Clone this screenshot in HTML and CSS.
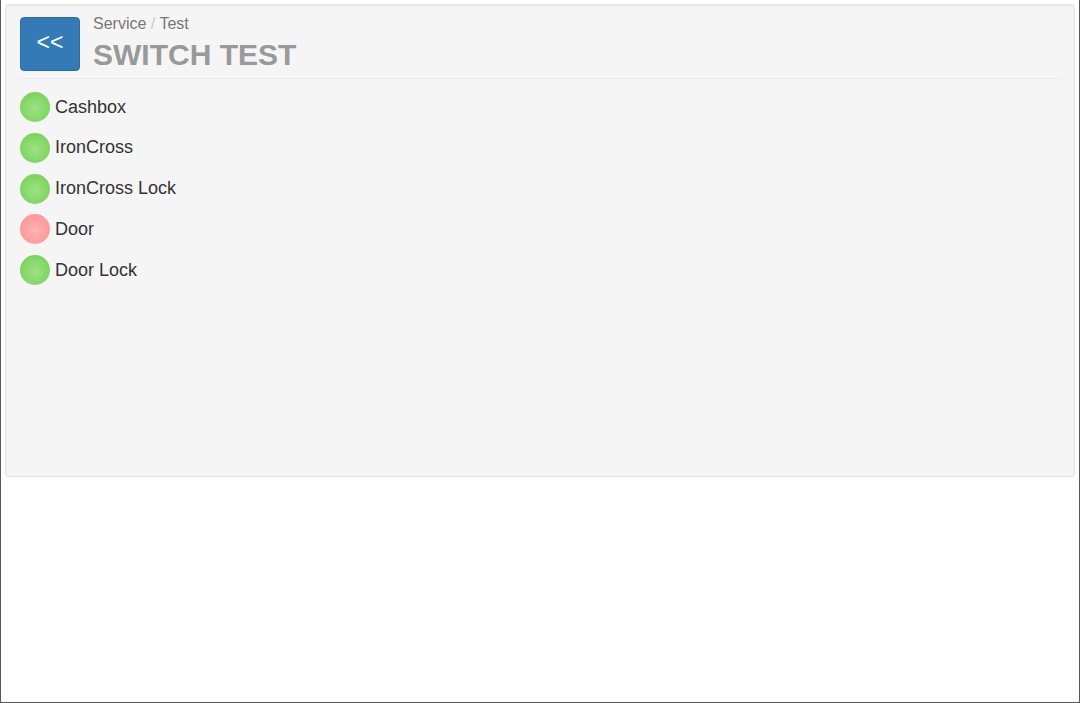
FILE: index.html
```html
<!DOCTYPE html>
<html>
<head>
    <meta name="viewport" content="width=device-width, initial-scale=1.0">
    <link rel="stylesheet" href="styles.css">
</head>
<body>
    <div class="well">
        <div class="page-header">
            <button class="back-btn">&lt;&lt;</button>
            <div class="titles">
                <div class="crumbs">Service <span class="sep">/</span> Test</div>
                <h1>SWITCH TEST</h1>
            </div>
        </div>

        <ul class="switch-list">
            <li><span class="led on"></span>Cashbox</li>
            <li><span class="led on"></span>IronCross</li>
            <li><span class="led on"></span>IronCross Lock</li>
            <li><span class="led off"></span>Door</li>
            <li><span class="led on"></span>Door Lock</li>
        </ul>
    </div>
</body>
</html>
```

FILE: styles.css
```css
html, body {
    margin: 0;
    padding: 0;
    height: 100%;
    background: #fff;
    font-family: "Liberation Sans", Arial, sans-serif;
}

body {
    box-sizing: border-box;
    border: 1px solid #595959;
    border-top: none;
    padding: 4px 4px 0 4px;
}

.well {
    background: #f5f5f5;
    border: 1px solid #e3e3e3;
    border-radius: 4px;
    box-shadow: inset 0 1px 1px rgba(0, 0, 0, 0.05);
    height: 473px;
    box-sizing: border-box;
    padding: 12px 12px 0 14px;
}

.page-header {
    display: flex;
    align-items: flex-start;
    border-bottom: 1px solid #eaeaea;
    padding-bottom: 5px;
}

.back-btn {
    width: 60px;
    height: 54px;
    background: #337ab7;
    border: 1px solid #2e6da4;
    border-radius: 4px;
    color: #fff;
    font-family: "Liberation Sans", Arial, sans-serif;
    font-size: 23px;
    padding: 0 0 4px 0;
    margin-right: 13px;
    cursor: pointer;
}

.crumbs {
    font-size: 16px;
    color: #777;
    line-height: 20px;
    margin-top: -3px;
}

.crumbs .sep {
    color: #ccc;
}

h1 {
    margin: 3px 0 0 0;
    font-size: 30px;
    font-weight: bold;
    color: #999;
    line-height: 36px;
}

.switch-list {
    list-style: none;
    margin: 13px 0 0 0;
    padding: 0;
    display: flex;
    flex-direction: column;
    gap: 10.75px;
}

.switch-list li {
    display: flex;
    align-items: center;
    height: 30px;
    font-size: 18px;
    color: #333;
}

.led {
    width: 30px;
    height: 30px;
    border-radius: 50%;
    margin-right: 5px;
    flex-shrink: 0;
}

.led.on {
    background: radial-gradient(circle at 50% 55%, #9ce283 0%, #88da6c 45%, #6dcc4d 100%);
}

.led.off {
    background: radial-gradient(circle at 50% 55%, #ffb3b3 0%, #ffa2a2 45%, #fb8f8f 100%);
}
```
